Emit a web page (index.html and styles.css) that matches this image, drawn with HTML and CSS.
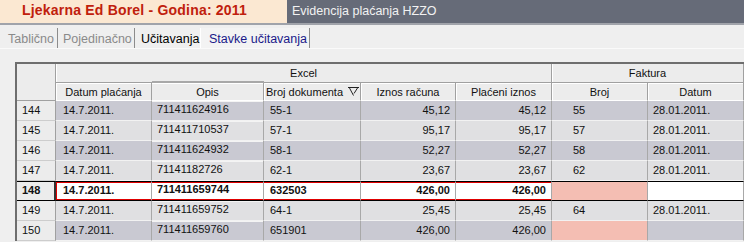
FILE: index.html
```html
<!DOCTYPE html>
<html lang="hr">
<head>
    <meta charset="UTF-8">
    <title>Evidencija plaćanja HZZO</title>
    <link rel="stylesheet" href="styles.css">
</head>
<body>
    <div class="titlebar">
        <div class="app-name">Ljekarna Ed Borel - Godina: 2011</div>
        <div class="module-name">Evidencija plaćanja HZZO</div>
    </div>

    <div class="tabs">
        <div class="tab tab-1 muted">Tablično</div>
        <div class="tab tab-2 muted">Pojedinačno</div>
        <div class="tab tab-3">Učitavanja</div>
        <div class="tab tab-4 active">Stavke učitavanja</div>
    </div>

    <div class="workarea">
        <div class="grid">
            <div class="corner"></div>
            <div class="group excel">Excel</div>
            <div class="group faktura">Faktura</div>

            <div class="colhead">Datum plaćanja</div>
            <div class="colhead raised">Opis</div>
            <div class="colhead sorted">
                <span>Broj dokumenta</span>
                <svg class="sort-icon" width="11" height="9" viewBox="0 0 11 9">
                    <path d="M0 0.5H11M1.5 1L5.5 8.5M9.5 1L6 6.5" stroke="#222" stroke-width="1" fill="none"/>
                </svg>
            </div>
            <div class="colhead">Iznos računa</div>
            <div class="colhead">Plaćeni iznos</div>
            <div class="colhead">Broj</div>
            <div class="colhead">Datum</div>

            <div class="row dark">
                <div class="rowhead">144</div>
                <div class="cell date">14.7.2011.</div>
                <div class="cell opis">711411624916</div>
                <div class="cell doc">55-1</div>
                <div class="cell num">45,12</div>
                <div class="cell num">45,12</div>
                <div class="cell fbroj">55</div>
                <div class="cell fdate">28.01.2011.</div>
            </div>
            <div class="row light">
                <div class="rowhead">145</div>
                <div class="cell date">14.7.2011.</div>
                <div class="cell opis">711411710537</div>
                <div class="cell doc">57-1</div>
                <div class="cell num">95,17</div>
                <div class="cell num">95,17</div>
                <div class="cell fbroj">57</div>
                <div class="cell fdate">28.01.2011.</div>
            </div>
            <div class="row dark">
                <div class="rowhead">146</div>
                <div class="cell date">14.7.2011.</div>
                <div class="cell opis">711411624932</div>
                <div class="cell doc">58-1</div>
                <div class="cell num">52,27</div>
                <div class="cell num">52,27</div>
                <div class="cell fbroj">58</div>
                <div class="cell fdate">28.01.2011.</div>
            </div>
            <div class="row light">
                <div class="rowhead">147</div>
                <div class="cell date">14.7.2011.</div>
                <div class="cell opis">71141182726</div>
                <div class="cell doc">62-1</div>
                <div class="cell num">23,67</div>
                <div class="cell num">23,67</div>
                <div class="cell fbroj">62</div>
                <div class="cell fdate">28.01.2011.</div>
            </div>
            <div class="row selected">
                <div class="rowhead">148</div>
                <div class="cell date">14.7.2011.</div>
                <div class="cell opis">711411659744</div>
                <div class="cell doc">632503</div>
                <div class="cell num">426,00</div>
                <div class="cell num">426,00</div>
                <div class="cell fbroj missing"></div>
                <div class="cell fdate"></div>
            </div>
            <div class="row light">
                <div class="rowhead">149</div>
                <div class="cell date">14.7.2011.</div>
                <div class="cell opis">711411659752</div>
                <div class="cell doc">64-1</div>
                <div class="cell num">25,45</div>
                <div class="cell num">25,45</div>
                <div class="cell fbroj">64</div>
                <div class="cell fdate">28.01.2011.</div>
            </div>
            <div class="row dark">
                <div class="rowhead">150</div>
                <div class="cell date">14.7.2011.</div>
                <div class="cell opis">711411659760</div>
                <div class="cell doc">651901</div>
                <div class="cell num">426,00</div>
                <div class="cell num">426,00</div>
                <div class="cell fbroj missing"></div>
                <div class="cell fdate"></div>
            </div>
        </div>
    </div>
</body>
</html>
```

FILE: styles.css
```css
body {
    margin: 0;
    width: 744px;
    height: 242px;
    overflow: hidden;
    background: #efefef;
    font-family: 'Liberation Sans', Arial, sans-serif;
}

/* title bar */
.titlebar {
    display: flex;
    height: 23px;
    background: #666b78;
    border-bottom: 2px solid #a0a3aa;
}

.app-name {
    width: 265px;
    padding: 0 0 3px 22px;
    background: #fbe8d2;
    color: #c0200c;
    font-weight: bold;
    font-size: 14px;
    line-height: 20px;
    letter-spacing: 0.2px;
}

.module-name {
    padding-left: 5px;
    color: #f2f2f2;
    font-size: 12.5px;
    line-height: 23px;
}

/* tabs */
.tabs {
    display: flex;
    align-items: flex-end;
    height: 23px;
    padding-left: 4px;
    border-bottom: 1px solid #fafafa;
}

.tab {
    box-sizing: border-box;
    height: 20px;
    padding-top: 2px;
    font-size: 12.5px;
    line-height: 18px;
    color: #000;
    white-space: nowrap;
}

.tab.muted {
    color: #8a8a8a;
}

.tab-1 {
    width: 54px;
    padding-left: 4px;
    border-right: 1px solid #8c8c8c;
}

.tab-2 {
    width: 77px;
    padding-left: 5px;
    border-right: 1px solid #8c8c8c;
}

.tab-3 {
    width: 65px;
    padding-left: 6px;
}

.tab-4.active {
    width: 110px;
    padding-left: 8px;
    color: #1a1a8a;
    background: #f3f3f3;
    border-left: 1px solid #fff;
    border-right: 1px solid #8c8c8c;
}

/* grid */
.workarea {
    padding: 13px 0 0 15px;
}

.grid {
    display: grid;
    grid-template-columns: 39px 96px 112px 97px 95px 96px 96px 96px;
    grid-template-rows: 19px 18px repeat(7, 20px);
    width: 727px;
    border-left: 2px solid #6e6e6e;
    border-top: 2px solid #6e6e6e;
    background: #ececec;
    font-size: 11px;
    color: #111;
}

.grid > div,
.row > div {
    box-sizing: border-box;
    white-space: nowrap;
}

.corner {
    grid-row: 1 / 3;
    grid-column: 1;
    border-right: 1px solid #a0a0a0;
    border-bottom: 1px solid #a0a0a0;
}

.group {
    display: flex;
    align-items: center;
    justify-content: center;
    border-right: 1px solid #a0a0a0;
    border-bottom: 1px solid #a0a0a0;
    box-shadow: inset 1px 0 0 #fff;
}

.group.excel {
    grid-column: 2 / 7;
}

.group.faktura {
    grid-column: 7 / 9;
}

.colhead {
    display: flex;
    align-items: center;
    justify-content: center;
    border-right: 1px solid #a0a0a0;
    border-bottom: 1px solid #fff;
    box-shadow: inset 1px 1px 0 #fff;
}

.colhead.raised {
    box-shadow: inset 0 1px 0 #fff, 0 -2px 0 #a8a8a8;
    position: relative;
}

.colhead.sorted {
    justify-content: flex-start;
    padding-left: 2px;
}

.sort-icon {
    margin: 0 0 1px 5px;
}

.row {
    display: contents;
}

.rowhead {
    padding-left: 5px;
    line-height: 19px;
    background: #ececec;
    border-right: 1px solid #a0a0a0;
    border-bottom: 1px solid #cdcdcd;
}

.cell {
    line-height: 19px;
    border-right: 1px solid #a8a8a8;
    border-bottom: 1px solid #f2f2f2;
}

.row.dark > .cell {
    background: #c9c9d2;
}

.row.light > .cell {
    background: #e0e0e2;
}

.cell.date {
    padding-left: 7px;
}

.cell.opis {
    padding-left: 5px;
    line-height: 16px;
    box-shadow: inset 0 1px 0 #f4f4f4;
}

.cell.doc {
    padding-left: 6px;
}

.cell.num {
    text-align: right;
    padding-right: 5px;
}

.cell.fbroj {
    padding-left: 21px;
}

.cell.fdate {
    padding-left: 5px;
}

.row > .cell.missing {
    background: #f4beb3;
}

/* selected row */
.row.selected > div {
    font-weight: bold;
    border-top: 1px solid #000;
    border-bottom: 1px solid #000;
    line-height: 17px;
}

.row.selected > .cell {
    background: #fff;
    box-shadow: inset 0 1px 0 #e00000, inset 0 -1px 0 #e00000;
}

.row.selected > .cell.date {
    box-shadow: inset 1px 0 0 #e00000, inset 0 1px 0 #e00000, inset 0 -1px 0 #e00000;
}

.row.selected > .cell.opis {
    line-height: 15px;
}

.row.selected > .rowhead {
    border-right: 1px solid #333;
    box-shadow: inset -1px 0 0 #333;
}

.row.selected > .fbroj,
.row.selected > .fdate {
    box-shadow: none;
}

.row.selected > .cell.missing {
    background: #f4beb3;
}
```
